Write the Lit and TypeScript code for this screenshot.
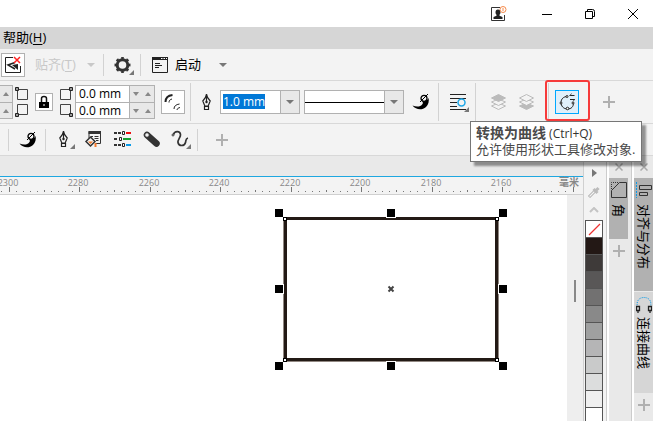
import { LitElement, html, css, svg } from "lit";
import { customElement, state } from "lit/decorators.js";

const wrap = (w: number, h: number, body: unknown) =>
  html`<svg width=${w} height=${h} viewBox="0 0 ${w} ${h}" aria-hidden="true">${body}</svg>`;

const more = svg`<path d="M21 15v5h-5z" fill="#777"/>`;

const icons = {
  account: wrap(16, 16, svg`<path d="M9 1.500H.5v13h13V9" fill="none" stroke="#333"/>
    <path d="M7 3.500c1.800 0 2.500 1.200 2.500 2.700 0 1.300-.5 2-1 2.600v1l3 1.200V13h-9v-2l3-1.200v-1c-.6-.6-1-1.300-1-2.600 0-1.500.7-2.700 2.500-2.700z" fill="#222"/>
    <circle cx="12" cy="3.500" r="3" fill="#fff" stroke="#f58a4b"/><path d="M12 2v3" stroke="#f58a4b"/>`),
  minimize: wrap(10, 10, svg`<path d="M0 5.500h10" stroke="#000"/>`),
  restore: wrap(10, 10, svg`<path d="M.5 2.500h7v7h-7zM2.500 2.500v-2h5q2 0 2 2v5h-2" fill="none" stroke="#000"/>`),
  close: wrap(10, 10, svg`<path d="M0 0l10 10M10 0L0 10" stroke="#000"/>`),
  snapOff: wrap(18, 18, svg`<path d="M9 1.500H1.500v15h15V10" fill="none" stroke="#222"/>
    <path d="M11 6.500L4 9l7 4" fill="none" stroke="#222" stroke-width="1.500"/><path d="M8 9l6-1v6z" fill="#222"/>
    <path d="M10 1l6 6M16 1l-6 6" stroke="#f22" stroke-width="1.500"/>`),
  gear: wrap(21, 21, svg`<circle cx="8.500" cy="11" r="5.300" fill="none" stroke="#333" stroke-width="3"/>
    <circle cx="8.500" cy="11" r="7" fill="none" stroke="#333" stroke-width="2" pathLength="16" stroke-dasharray="1" stroke-dashoffset=".5"/>
    <path d="M20 16v5h-5z" fill="#777"/>`),
  launch: wrap(18, 18, svg`<path d="M1.500 1.500h15v15h-15z" fill="none" stroke="#222"/><path d="M1 1h16v3H1z" fill="#222"/>
    <path d="M10 2.500h1.500M12.500 2.500H14M15 2.500h1" stroke="#fff"/><path d="M4 7.500h5M4 9.500h7M4 11.500h4" stroke="#222"/>`),
  scallop: wrap(18, 18, svg`<path d="M.5 12.500c4 1.800 8 1.500 10-1.500.8-1.200.3-2-.5-2.500 2 .5 5-.5 6.500-3.500.8 3 0 6.500-2.500 9-4 3.500-10 3-13.500-1.500z" fill="#000"/>
    <circle cx="12" cy="5.300" r="3" fill="none" stroke="#000" stroke-width="1.300"/>
    <path d="M8 9l8-8" stroke="#000"/>`),
  pen: (c = false) => wrap(21, 21, svg`<path d="M9.500 2c.3 3 1.500 4.800 3.700 7l-2 5h-3.400l-2-5c2.200-2.200 3.400-4 3.700-7zM9.500 3v7" fill="none" stroke="#222" stroke-width="1.200"/>
    <circle cx="9.500" cy="10" r="1.200" fill="#222"/><path d="M7.500 14.500h4v3h-4z" fill="none" stroke="#222" stroke-width="1.200"/>${c ? more : ""}`),
  fill: wrap(21, 21, svg`<path d="M6 9V2.500h11.500v12H13" fill="none" stroke="#333"/><path d="M5.500 2h12.500v3H5.500z" fill="#333"/>
    <path d="M8 7.500h2M11.500 7.500h4M11.500 9.500h4M13 11.500h2.500" stroke="#333"/>
    <path d="M7.500 8l4.500 4.500-4.500 4.500L3 12.500z" fill="#f3f3f3" stroke="#333" stroke-width="1.500"/>
    <path d="M5 12.500h5l-2.500 2.500z" fill="#f47a2b"/><path d="M12.500 14v4" stroke="#f47a2b" stroke-width="2"/>`),
  sliders: wrap(21, 21, svg`<g stroke-width="2" fill="none"><path d="M2 4h7M2 10h4M2 16h7" stroke="#333" stroke-dasharray="3 1"/><path d="M14 4h5" stroke="#e11"/><path d="M11 10h8" stroke="#16a030"/><path d="M14 16h5" stroke="#0a9be8"/></g>
    <g fill="#fff" stroke="#222"><path d="M10.500 2.500h2v3h-2zM7.500 8.500h2v3h-2zM10.500 14.500h2v3h-2z"/></g>`),
  capsule: wrap(21, 21, svg`<path d="M6 6l9.500 8.500" stroke="#333" stroke-width="6.500" stroke-linecap="round"/><circle cx="6" cy="6" r="2.300" fill="#f3f3f3" stroke="#333"/>`),
  curve: wrap(21, 21, svg`<path d="M3.500 5.500c1-3.500 6.500-4 7 0 .3 3-3 5-2.500 8 .7 4 6.500 4 7.500 0 .6-2.500 0-4 2.500-4.500" fill="none" stroke="#333" stroke-width="1.700"/><circle cx="3" cy="6" r="1" fill="#fff" stroke="#333"/>${more}`),
  corner: (k: number) => wrap(14, 14, svg`<g transform=${["", "rotate(-90 7 7)", "rotate(90 7 7)", "rotate(180 7 7)"][k]}>
    <path d="M2.500 2.500h10v10h-10z" fill="none" stroke="#444"/><path d="M.5.5h3v3h-3z" fill="#999" stroke="#222"/></g>`),
  lock: wrap(12, 14, svg`<path d="M3.500 7V3.500q0-2 2.500-2t2.500 2V7" fill="none" stroke="#111" stroke-width="1.500"/><path d="M1 7h10v6H1z" fill="#000"/><path d="M6 9v2" stroke="#fff"/>`),
  scale: wrap(20, 20, svg`<g fill="none" stroke="#222"><path d="M2.500 10c0-4 2.500-6.500 7-7" stroke-width="2"/><path d="M6 10.500c0-2 1-3 3-3.500"/><path d="M11 17c0-3 2-4.500 5.500-5"/><path d="M14 18c.3-1.500 1-2 3-2.500"/></g>`),
  wrapText: wrap(24, 24, svg`<path d="M3 4.500h16M3 8.500h16M3 12.500h7M3 16.500h7M3 19.500h16" stroke="#222"/>
    <circle cx="14.500" cy="12.500" r="3.500" fill="#f3f3f3" stroke="#1ea7e8" stroke-width="1.500"/><path d="M22 17v5h-5z" fill="#777"/>`),
  front: wrap(20, 20, svg`<g stroke="#bbb" fill="#f3f3f3"><path d="M3.500 14L10.500 11l7 3-7 3.500z"/><path d="M3.500 10L10.500 7l7 3-7 3.500z"/><path d="M3.500 6L10.500 2.500l7 3.500-7 3.500z" fill="#bbb"/></g>`),
  back: wrap(20, 20, svg`<g stroke="#bbb" fill="#f3f3f3"><path d="M3.500 14L10.500 11l7 3-7 3.500z" fill="#bbb"/><path d="M3.500 10L10.500 7l7 3-7 3.500z"/><path d="M3.500 6L10.500 2.500l7 3.500-7 3.500z"/></g>`),
  toCurve: wrap(20, 20, svg`<path d="M10.500 4.500C6.500 4.500 4 7 4 10.500s2.500 6.500 6.500 6.500 6-2.500 6-6" fill="none" stroke="#222"/>
    <g fill="#fff" stroke="#222"><circle cx="10" cy="4.500" r="1"/><circle cx="4" cy="11" r="1"/><circle cx="10.500" cy="16.500" r="1.300"/><circle cx="16" cy="11" r="1"/></g>
    <path d="M12.500 3.500h5M13 7.500h5" stroke="#222"/><path d="M13 3.500l1.500-2M17.500 7.500l-1.500 2" stroke="#555"/>`),
  plus: wrap(12, 12, svg`<path d="M6 0v12M0 6h12" stroke="#b0b0b0" stroke-width="2"/>`),
  x: wrap(8, 8, svg`<path d="M.5.5l7 7M7.500.5l-7 7" stroke="#aaa" stroke-width="1.500"/>`),
  down: wrap(8, 4, svg`<path d="M0 0h8L4 4z" fill="currentColor"/>`),
  tinyDown: wrap(6, 4, svg`<path d="M0 0h6L3 4z" fill="#888"/>`),
  tinyUp: wrap(6, 4, svg`<path d="M0 4h6L3 0z" fill="#888"/>`),
  play: wrap(5, 8, svg`<path d="M0 0l5 4-5 4z" fill="#777"/>`),
  dropper: wrap(14, 14, svg`<path d="M2 12l6.500-6.500" stroke="#aaa" stroke-width="3"/><path d="M2.500 11.500L8 6" stroke="#f3f3f3" stroke-width="1.300"/><path d="M6.500 4l4 4M9 5.500L11.500 3" stroke="#bbb" stroke-width="3"/>`),
  chevron: wrap(10, 6, svg`<path d="M1 5l4-4 4 4" fill="none" stroke="#c4c4c4" stroke-width="2"/>`),
  chamfer: wrap(16, 16, svg`<path d="M.5 15.500v-7l8-8h7v15z" fill="none" stroke="#333"/><path d="M.5 7V.5H8" fill="none" stroke="#333" stroke-dasharray="1 1"/>`),
  align: wrap(16, 16, svg`<path d="M.5 0v16" stroke="#0a9be8" stroke-dasharray="2 1"/><path d="M3.500 3.500h12v4h-12zM3.500 10.500h8v3h-8z" fill="none" stroke="#333"/>`),
  join: wrap(16, 18, svg`<path d="M1.500 11C0 5 3 1.500 8 1.500S16 5 14.500 11" fill="none" stroke="#0a9be8" stroke-dasharray="1 1"/><path d="M.5 10.500h3v4h-3zM12.500 10.500h3v4h-3zM2 14v3M14 14v3" fill="none" stroke="#222" stroke-width="1.300"/>`),
};

const swatches = ["#231815", "#3e3a39", "#595757", "#727171", "#898989", "#9fa0a0", "#b5b5b6", "#c9caca", "#dcdddd", "#efefef", "#ffffff"];
const marks = [2300, 2280, 2260, 2240, 2220, 2200, 2180, 2160];

@customElement("app-root")
export class AppRoot extends LitElement {
  @state() private outline = "1.0 mm";

  static styles = css`
    :host {
      display: flex;
      flex-direction: column;
      min-height: 100vh;
      background: #e9e9e9;
      color: #000;
      font: 13px/16px "Open Sans", "Noto Sans CJK SC", sans-serif;
    }
    * { box-sizing: border-box; }
    svg { display: block; flex: none; }
    button {
      display: flex; align-items: center; justify-content: center; flex: none;
      padding: 0; border: 0; background: none; font: inherit; color: inherit;
    }
    u { text-underline-offset: 2px; }
    .title { display: flex; align-items: center; justify-content: flex-end; gap: 3px; height: 27px; background: #fff; }
    .account { margin-right: 17px; }
    .win { width: 40px; height: 27px; }
    .menu { display: flex; align-items: center; height: 22px; padding: 0 0 2px 3px; background: #d6d6d6; }
    .menu a { color: inherit; text-decoration: none; }
    .bar { display: flex; align-items: center; background: #f3f3f3; border-bottom: 1px solid #d8d8d8; }
    .standard { height: 32px; padding-left: 1px; }
    .standard span { padding-bottom: 2px; }
    .property { height: 43px; }
    .tools { height: 32px; padding-left: 8px; }
    .sep { width: 1px; flex: none; height: 22px; background: #d2d2d2; }
    .property .sep { height: 38px; }
    .g2 { margin-left: 2px; }
    .g4 { margin-left: 4px; }
    .g5 { margin-left: 5px; }
    .g6 { margin-left: 6px; }
    .g8 { margin-left: 8px; }
    .g10 { margin-left: 10px; }
    .g12 { margin-left: 12px; }
    .boxed { width: 24px; height: 24px; background: #fff; border: 1px solid #b1b1b1; }
    .snap { width: 60px; justify-content: space-between; color: #c8c8c8; }
    .launch { width: 76px; gap: 6px; }
    .launch svg:last-child { margin-left: auto; color: #777; }
    .tool { width: 21px; }
    .wide { width: 36px; }
    .add { width: 24px; }
    .pair { display: flex; flex-direction: column; gap: 2px; }
    .lock { width: 18px; height: 18px; background: #fff; border: 1px solid #b1b1b1; }
    .stub { width: 13px; border: 1px solid #b1b1b1; border-left: 0; background: #e8e8e8; }
    .stub button { width: 12px; height: 16px; }
    .stub button + button, .field + .field { border-top: 1px solid #b1b1b1; }
    .fields { width: 80px; border: 1px solid #b1b1b1; background: #e8e8e8; }
    .field { display: flex; height: 16px; }
    input { font: 12px/15px "Open Sans", sans-serif; border: 0; border-radius: 0; padding: 0; outline: 0; min-width: 0; }
    .field input { width: 54px; padding: 0 0 1px 3px; background: #fff; border-right: 1px solid #b1b1b1; }
    .field button { width: 12px; }
    .combo { display: flex; align-items: center; height: 24px; border: 1px solid #b1b1b1; background: #fff; flex: none; }
    .width { width: 80px; }
    .style { width: 100px; }
    .combo input { width: 42px; margin: 0 0 1px 2px; height: 15px; background: #0078d7; color: #fff; }
    .combo button { width: 19px; height: 22px; margin-left: auto; background: #e8e8e8; border-left: 1px solid #b1b1b1; color: #777; }
    .line { width: 80px; height: 1px; background: #000; }
    .spot { position: relative; }
    .convert { width: 24px; height: 24px; background: #e0effa; border: 1px solid #00a8ff; }
    .ring { position: absolute; left: -10px; top: -10px; width: 45px; height: 41px; border: 2px solid #f63a3a; border-radius: 3px; pointer-events: none; }
    .tip {
      position: absolute; z-index: 2; left: -85px; top: 31px; width: 172px; height: 41px; padding: 3px 5px;
      background: #fff; border: 1px solid #767676; box-shadow: 4px 4px 2px #0006; color: #4a4a4a;
      white-space: nowrap; font-size: 13px;
    }
    .tip div { height: 16px; font-size: 12px; color: #333; }
    .tip b { font-size: 14px; color: #4a4a4a; }
    .tip p { margin: 0; }
    .main { display: flex; flex: 1; }
    .document { display: flex; flex-direction: column; flex: 1; min-width: 0; }
    .tabs { height: 20px; }
    .ruler { height: 19px; border-top: 1px solid #1ea7e0; border-bottom: 1px solid #d0d0d0; background: #f3f3f3; }
    .ruler svg { overflow: visible; }
    .ruler text { font: 9px "Open Sans", "Noto Sans CJK SC", sans-serif; fill: #888; text-anchor: middle; }
    .ruler .unit { font-size: 10px; font-weight: 700; }
    .work { display: flex; flex: 1; }
    .canvas { flex: 1; min-width: 0; background: #fff; overflow: hidden; }
    .scroll { width: 16px; padding: 85px 0 0 7px; background: #eee; }
    .thumb { width: 2px; height: 22px; background: #888; }
    .palette { display: flex; flex-direction: column; align-items: center; width: 23px; padding: 8px 3px 0 1px; border-left: 1px solid #d0d0d0; background: #f3f3f3; }
    .palette button { height: 17px; width: 18px; }
    .palette .pick { height: 22px; }
    .palette .up { height: 14px; margin-bottom: 3px; }
    .chips { border: 1px solid #555; border-bottom: 0; width: 18px; }
    .chips .chip { width: 16px; border-bottom: 1px solid #555; }
    .docker { width: 25px; border-left: 1px solid #ccc; box-shadow: inset 2px 0 #fff; padding: 0 3px 0 2px; }
    .docker:last-child { width: 22px; padding-right: 0; }
    .docker button { width: 100%; }
    .shut { height: 22px; }
    .panel { flex-direction: column; justify-content: flex-start; gap: 6px; padding: 4px 0 8px; background: #b1b1b1; }
    .panel span { writing-mode: vertical-rl; text-orientation: sideways; line-height: 18px; }
    .panel.corner { height: 61px; }
    .panel.align { height: 113px; }
    .panel.join { height: 102px; background: #d6d6d6; border-top: 1px solid #e9e9e9; gap: 3px; }
    .more { height: 24px; }
  `;

  private ruler() {
    const ticks = Array.from({ length: 82 }, (_, i) => i - 1);
    return html`<svg width="100%" height="17" shape-rendering="crispEdges" role="img" aria-label="标尺">
      ${ticks.map((i) => {
        const x = Math.floor(9 + (i * 70.5) / 10);
        const h = i % 10 === 0 ? 5 : i % 5 === 0 ? 2 : 1;
        return svg`<rect x=${x} y=${15 - h} width="1" height=${h} fill="#777"/>`;
      })}
      ${marks.map((m, i) => svg`<text x=${Math.floor(8 + i * 70.5)} y="9">${m}</text>`)}
      <text class="unit" x="569" y="9">毫米</text>
    </svg>`;
  }

  private drawing() {
    const xs = [275, 387, 499];
    const ys = [14, 90, 167];
    const handles = ys.flatMap((y) => xs.map((x) => [x, y])).filter(([x, y]) => x !== 387 || y !== 90);
    return html`<svg width="520" height="190" role="img" aria-label="矩形">
      <rect x="284" y="23" width="214" height="143" fill="none" stroke="#918882" stroke-width="2"/>
      <rect x="285.500" y="23.500" width="211" height="141" fill="none" stroke="#231a15" stroke-width="3"/>
      ${handles.map(([x, y]) => svg`<rect x=${x - 1} y=${y - 1} width="10" height="10" fill="#fff"/><rect x=${x} y=${y} width="8" height="8"/>`)}
      ${[22, 163].flatMap((y) => [283, 495].map((x) => svg`<rect x=${x} y=${y} width="4" height="4"/><rect x=${x + 1} y=${y + 1} width="2" height="2" fill="#fff"/>`))}
      <path d="M388.500 91.500l5 5M393.500 91.500l-5 5" stroke="#444" stroke-width="2"/>
    </svg>`;
  }

  private size(label: string) {
    return html`<div class="field"><input aria-label=${label} value="0.0 mm" /><button aria-label="减小">${icons.tinyDown}</button><button aria-label="增大">${icons.tinyUp}</button></div>`;
  }

  render() {
    return html`
      <header class="title">
        <button class="account" aria-label="帐户">${icons.account}</button>
        <button class="win" aria-label="最小化">${icons.minimize}</button>
        <button class="win" aria-label="还原">${icons.restore}</button>
        <button class="win" aria-label="关闭">${icons.close}</button>
      </header>
      <nav class="menu"><a href="#help">帮助(<u>H</u>)</a></nav>
      <div class="bar standard">
        <button class="boxed" aria-label="关闭贴齐">${icons.snapOff}</button>
        <button class="snap g10" disabled><span>贴齐(<u>T</u>)</span>${icons.down}</button>
        <i class="sep g8"></i>
        <button class="tool g10" aria-label="选项">${icons.gear}</button>
        <i class="sep g5"></i>
        <button class="launch g10">${icons.launch}<span>启动</span>${icons.down}</button>
      </div>
      <div class="bar property">
        <div class="stub"><button aria-label="增大宽度">${icons.tinyUp}</button><button aria-label="增大高度">${icons.tinyUp}</button></div>
        <div class="pair g2">${icons.corner(0)}${icons.corner(1)}</div>
        <button class="lock g6" aria-label="同时编辑所有角">${icons.lock}</button>
        <div class="pair g6">${icons.corner(2)}${icons.corner(3)}</div>
        <div class="fields g2">${this.size("右上角半径")}${this.size("右下角半径")}</div>
        <button class="boxed g6" aria-label="相对角缩放">${icons.scale}</button>
        <i class="sep g5"></i>
        <span class="g6">${icons.pen()}</span>
        <div class="combo width g2">
          <input aria-label="轮廓宽度" .value=${this.outline} @input=${(e: Event) => (this.outline = (e.target as HTMLInputElement).value)} />
          <button aria-label="选择宽度">${icons.down}</button>
        </div>
        <div class="combo style g4"><i class="line"></i><button aria-label="线条样式">${icons.down}</button></div>
        <button class="g8" aria-label="变量轮廓">${icons.scallop}</button>
        <i class="sep g8"></i>
        <button class="g8" aria-label="文本换行">${icons.wrapText}</button>
        <i class="sep g4"></i>
        <button class="g12" aria-label="到图层前面" disabled>${icons.front}</button>
        <button class="g8" aria-label="到图层后面" disabled>${icons.back}</button>
        <i class="sep g12"></i>
        <div class="spot g6">
          <button class="convert" aria-label="转换为曲线">${icons.toCurve}</button>
          <span class="ring"></span>
          <div class="tip" role="tooltip"><div><b>转换为曲线</b> (Ctrl+Q)</div><p>允许使用形状工具修改对象.</p></div>
        </div>
        <button class="wide g12" aria-label="自定义">${icons.plus}</button>
      </div>
      <div class="bar tools">
        <i class="sep"></i>
        <button class="g10" aria-label="变量轮廓工具">${icons.scallop}</button>
        <i class="sep g8"></i>
        <button class="tool g8" aria-label="轮廓笔">${icons.pen(true)}</button>
        <button class="tool g8" aria-label="编辑填充">${icons.fill}</button>
        <button class="tool g8" aria-label="颜色">${icons.sliders}</button>
        <button class="tool g8" aria-label="透明度">${icons.capsule}</button>
        <button class="tool g8" aria-label="曲线">${icons.curve}</button>
        <i class="sep g6"></i>
        <button class="add g12" aria-label="添加工具">${icons.plus}</button>
      </div>
      <main class="main">
        <section class="document">
          <div class="tabs"></div>
          <div class="ruler">${this.ruler()}</div>
          <div class="work">
            <div class="canvas">${this.drawing()}</div>
            <div class="scroll"><div class="thumb"></div></div>
          </div>
        </section>
        <aside class="palette">
          <button aria-label="调色板菜单">${icons.play}</button>
          <button class="pick" aria-label="滴管">${icons.dropper}</button>
          <button class="up" aria-label="向上">${icons.chevron}</button>
          <div class="chips">
            <button class="chip" style="background:#fff" aria-label="无颜色">${wrap(16, 16, svg`<path d="M3 14L14 3" stroke="#e33" stroke-width="1.200"/>`)}</button>
            ${swatches.map((c) => html`<button class="chip" style="background:${c}" aria-label=${c}></button>`)}
          </div>
        </aside>
        <aside class="docker">
          <button class="shut" aria-label="关闭泊坞窗">${icons.x}</button>
          <button class="panel corner">${icons.chamfer}<span>角</span></button>
          <button class="more" aria-label="添加泊坞窗">${icons.plus}</button>
        </aside>
        <aside class="docker">
          <button class="shut" aria-label="关闭泊坞窗">${icons.x}</button>
          <button class="panel align">${icons.align}<span>对齐与分布</span></button>
          <button class="panel join">${icons.join}<span>连接曲线</span></button>
          <button class="more" aria-label="添加泊坞窗">${icons.plus}</button>
        </aside>
      </main>
    `;
  }
}
